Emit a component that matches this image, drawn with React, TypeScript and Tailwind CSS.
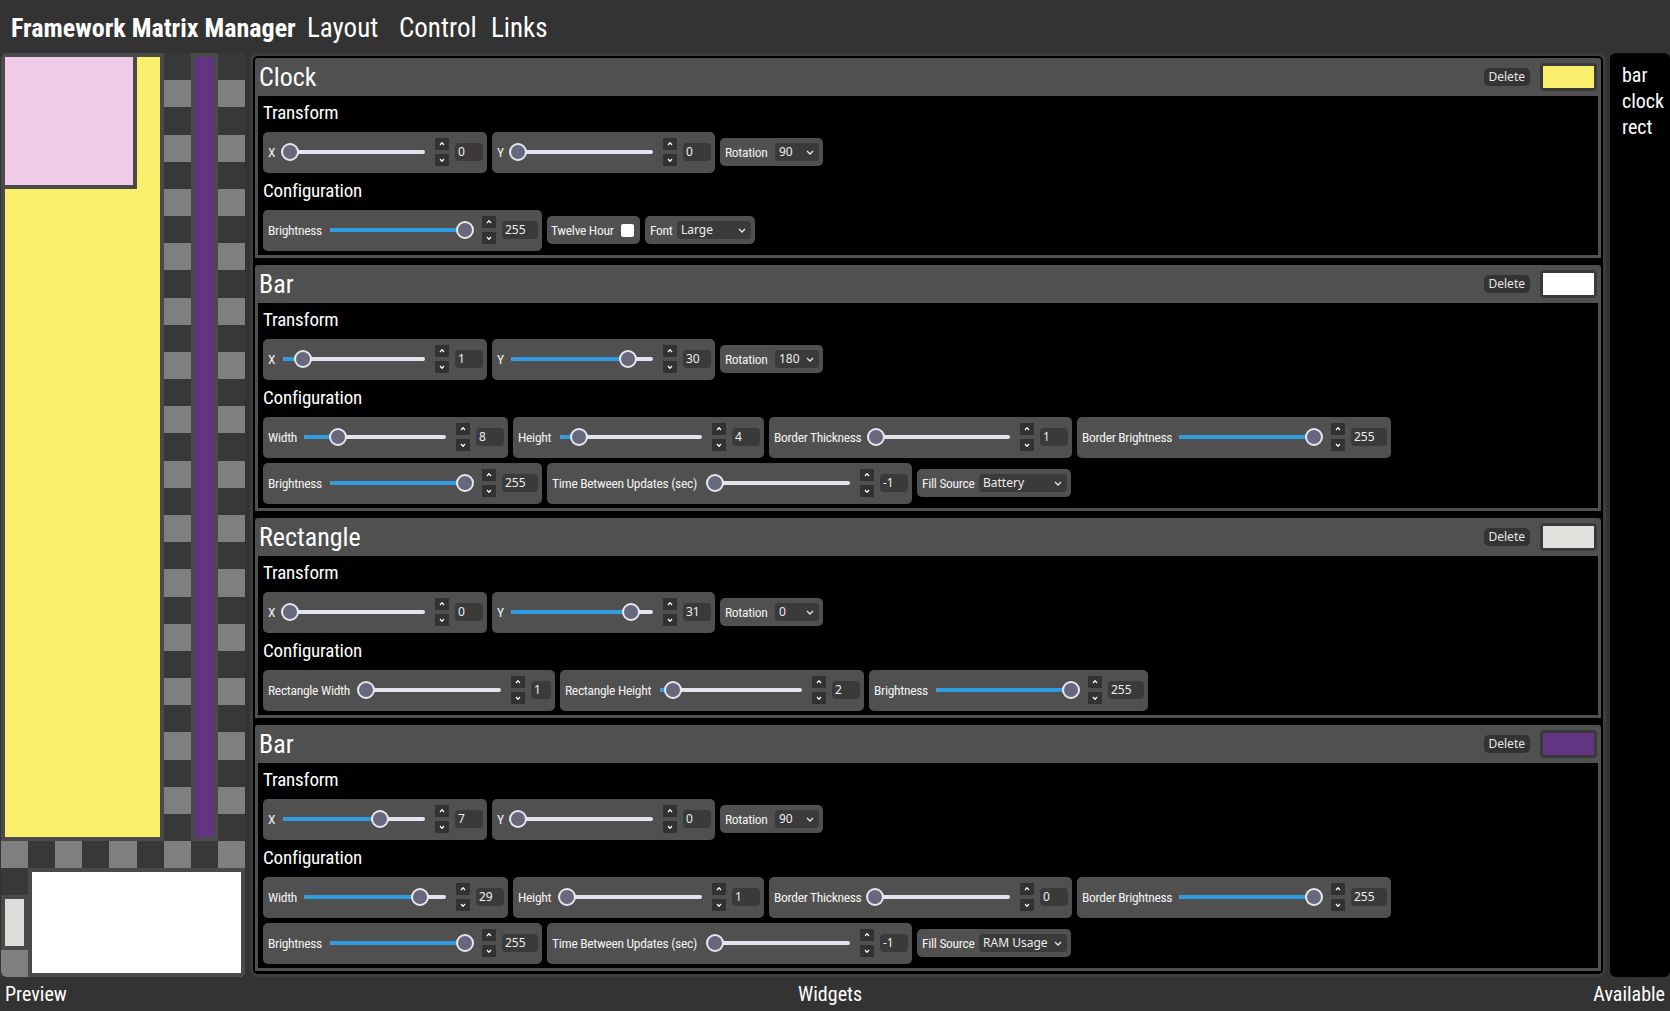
import React from "react";

type Slider = { kind: "slider"; label: string; value: string; pos: number; w: string; iw?: string };
type Select = { kind: "select"; label: string; value: string; w: string; sw: string };
type Check = { kind: "check"; label: string; w: string };
type Ctrl = Slider | Select | Check;

type Card = { title: string; swatch: string; transform: Ctrl[]; config: Ctrl[][] };

const xy = (x: string, xp: number, y: string, yp: number, rot: string): Ctrl[] => [
  { kind: "slider", label: "X", value: x, pos: xp, w: "w-[224px]" },
  { kind: "slider", label: "Y", value: y, pos: yp, w: "w-[223px]" },
  { kind: "select", label: "Rotation", value: rot, w: "w-[103px]", sw: "w-[44px]" },
];

const barConfig = (wv: string, wp: number, hv: string, hp: number, bt: string, btp: number, fill: string): Ctrl[][] => [
  [
    { kind: "slider", label: "Width", value: wv, pos: wp, w: "w-[245px]" },
    { kind: "slider", label: "Height", value: hv, pos: hp, w: "w-[251px]" },
    { kind: "slider", label: "Border Thickness", value: bt, pos: btp, w: "w-[303px]" },
    { kind: "slider", label: "Border Brightness", value: "255", pos: 1, w: "w-[314px]", iw: "w-[36px]" },
  ],
  [
    { kind: "slider", label: "Brightness", value: "255", pos: 1, w: "w-[279px]", iw: "w-[36px]" },
    { kind: "slider", label: "Time Between Updates (sec)", value: "-1", pos: 0, w: "w-[365px]" },
    { kind: "select", label: "Fill Source", value: fill, w: "w-[154px]", sw: "w-[88px]" },
  ],
];

const cards: Card[] = [
  {
    title: "Clock",
    swatch: "bg-[#f9ef6d]",
    transform: xy("0", 0, "0", 0, "90"),
    config: [
      [
        { kind: "slider", label: "Brightness", value: "255", pos: 1, w: "w-[279px]", iw: "w-[36px]" },
        { kind: "check", label: "Twelve Hour", w: "w-[93px]" },
        { kind: "select", label: "Font", value: "Large", w: "w-[110px]", sw: "w-[74px]" },
      ],
    ],
  },
  {
    title: "Bar",
    swatch: "bg-white",
    transform: xy("1", 0.1, "30", 0.857, "180"),
    config: barConfig("8", 0.21, "4", 0.09, "1", 0.01, "Battery"),
  },
  {
    title: "Rectangle",
    swatch: "bg-[#e0e0dc]",
    transform: xy("0", 0, "31", 0.886, "0"),
    config: [
      [
        { kind: "slider", label: "Rectangle Width", value: "1", pos: 0, w: "w-[292px]", iw: "w-[20px]" },
        { kind: "slider", label: "Rectangle Height", value: "2", pos: 0.05, w: "w-[304px]" },
        { kind: "slider", label: "Brightness", value: "255", pos: 1, w: "w-[279px]", iw: "w-[36px]" },
      ],
    ],
  },
  {
    title: "Bar",
    swatch: "bg-[#623582]",
    transform: xy("7", 0.7, "0", 0, "90"),
    config: barConfig("29", 0.853, "1", 0, "0", 0, "RAM Usage"),
  },
];

// preview widgets on the 9x34 matrix (col, row, w, h)
const previewItems = [
  { c: 0, r: 0, w: 6, h: 29, color: "bg-[#f9ef6d]" },
  { c: 0, r: 0, w: 5, h: 5, color: "bg-[#efcbe9]" },
  { c: 7, r: 0, w: 1, h: 29, color: "bg-[#623582]" },
  { c: 1, r: 30, w: 8, h: 4, color: "bg-white" },
  { c: 0, r: 31, w: 1, h: 2, color: "bg-[#dcdcd8]" },
];

const cells = Array.from({ length: 9 * 34 }, (_, i) => i);

const UI_FONT = "font-['Noto_Sans','Open_Sans',sans-serif] [font-stretch:normal]";
const LABEL = "min-w-0 flex-1 whitespace-nowrap text-[13.5px] tracking-[-0.3px] text-[#f2f2f2]";

const Caret = ({ down }: { down?: boolean }) => (
  <svg width="6" height="4" viewBox="0 0 6 4">
    <polyline
      points={down ? "1,1 3,3.3 5,1" : "1,3 3,0.7 5,3"}
      fill="none"
      stroke="white"
      strokeWidth="1.2"
    />
  </svg>
);

const Chevron = () => (
  <svg width="8" height="5" viewBox="0 0 8 5" className="shrink-0">
    <polyline points="1,1 4,4 7,1" fill="none" stroke="#e8e8e8" strokeWidth="1.3" />
  </svg>
);

function SliderBox({ c }: { c: Slider }) {
  const x = c.pos * 128;
  return (
    <div className={`${c.w} flex h-[41px] shrink-0 items-center rounded-[5px] bg-[#505050] pl-[5px] pr-[4px]`}>
      <span className={LABEL}>{c.label}</span>
      <div className="relative h-[18px] w-[146px] shrink-0">
        <div className="absolute left-[2px] right-[2px] top-[7px] h-[4px] rounded-full bg-[#e4e4ec]" />
        <div className="absolute left-[2px] top-[7px] h-[4px] rounded-full bg-[#2f9ce0]" style={{ width: x + 7 }} />
        <div
          className="absolute top-0 h-[18px] w-[18px] rounded-full border-2 border-[#e6e6ee] bg-[#67687b]"
          style={{ left: x }}
        />
      </div>
      <div className="ml-[8px] flex w-[14px] shrink-0 flex-col gap-[4px]">
        <div className="flex h-[12px] items-center justify-center bg-[#323232]">
          <Caret />
        </div>
        <div className="flex h-[12px] items-center justify-center bg-[#323232]">
          <Caret down />
        </div>
      </div>
      <div className={`${c.iw ?? "w-[28px]"} ${UI_FONT} ml-[6px] flex h-[18px] shrink-0 items-center rounded-[4px] bg-[#3a3a3a] pl-[3px] text-[12px] text-[#eeeeee]`}>
        {c.value}
      </div>
    </div>
  );
}

function SelectBox({ c }: { c: Select }) {
  return (
    <div className={`${c.w} flex h-[28px] shrink-0 items-center rounded-[5px] bg-[#505050] pl-[5px] pr-[4px]`}>
      <span className={LABEL}>{c.label}</span>
      <div className={`${c.sw} ${UI_FONT} flex h-[18px] shrink-0 items-center justify-between rounded-[4px] bg-[#3a3a3a] pl-[4px] pr-[5px] text-[12px] text-[#eeeeee]`}>
        <span className="whitespace-nowrap">{c.value}</span>
        <Chevron />
      </div>
    </div>
  );
}

function CheckBox({ c }: { c: Check }) {
  return (
    <div className={`${c.w} flex h-[28px] shrink-0 items-center rounded-[5px] bg-[#505050] pl-[4px] pr-[6px]`}>
      <span className={LABEL}>{c.label}</span>
      <div className="h-[13px] w-[13px] shrink-0 rounded-[2px] bg-white" />
    </div>
  );
}

function Control({ c }: { c: Ctrl }) {
  if (c.kind === "slider") return <SliderBox c={c} />;
  if (c.kind === "select") return <SelectBox c={c} />;
  return <CheckBox c={c} />;
}

function Row({ items }: { items: Ctrl[] }) {
  return (
    <div className="flex h-[42px] items-center gap-[5px]">
      {items.map((c, i) => (
        <Control key={i} c={c} />
      ))}
    </div>
  );
}

function WidgetCard({ card }: { card: Card }) {
  return (
    <div className="flex flex-col rounded-t-[3px] bg-[#505050] px-[3px] pb-[3px]">
      <div className="flex h-[38px] items-center justify-between pl-[1px] pr-[1px]">
        <span className="text-[26px] leading-none text-white">{card.title}</span>
        <div className="flex items-center gap-[10px]">
          <button className={`${UI_FONT} h-[18px] rounded-[5px] bg-[#333333] px-[5px] text-[12px] leading-none text-[#e8e8e8]`}>
            Delete
          </button>
          <div className="h-[28px] w-[57px] rounded-[4px] bg-[#3a3a3a] p-[3px]">
            <div className={`h-full w-full ${card.swatch}`} />
          </div>
        </div>
      </div>
      <div className="flex flex-col bg-black pb-[4px] pl-[5px] pt-[4px]">
        <div className="flex h-[26px] items-center text-[19px] tracking-[-0.2px] text-white">Transform</div>
        <div className="mt-[5px]">
          <Row items={card.transform} />
        </div>
        <div className="mt-[5px] flex h-[26px] items-center text-[19px] tracking-[-0.2px] text-white">Configuration</div>
        <div className="mt-[5px] flex flex-col gap-[4px]">
          {card.config.map((r, i) => (
            <Row key={i} items={r} />
          ))}
        </div>
      </div>
    </div>
  );
}

function Preview() {
  return (
    <div className="relative w-[244px] shrink-0 overflow-hidden rounded-[6px] bg-[#474747]">
      <div className="absolute inset-0 grid grid-cols-9 grid-rows-[repeat(34,minmax(0,1fr))]">
        {cells.map((i) => {
          const r = Math.floor(i / 9);
          const c = i % 9;
          return <div key={i} className={(r + c) % 2 === 0 ? "bg-[#383838]" : "bg-[#7f7f7f]"} />;
        })}
      </div>
      <div className="absolute inset-0 grid grid-cols-9 grid-rows-[repeat(34,minmax(0,1fr))]">
        {previewItems.map((p, i) => (
          <div
            key={i}
            className="border-4 border-[#4a4a4a]"
            style={{ gridColumn: `${p.c + 1} / span ${p.w}`, gridRow: `${p.r + 1} / span ${p.h}` }}
          >
            <div className={`h-full w-full ${p.color}`} />
          </div>
        ))}
      </div>
    </div>
  );
}

export default function App() {
  return (
    <div className="flex h-[1011px] w-[1670px] flex-col overflow-hidden bg-[#333333] font-['Roboto','Liberation_Sans',sans-serif] text-white [font-stretch:condensed]">
      {/* top bar */}
      <div className="flex h-[53px] shrink-0 items-center pl-[11px] pt-[4px] text-[27px]">
        <span className="w-[296px] whitespace-nowrap text-[26px] font-bold">Framework Matrix Manager</span>
        <span className="w-[92px]">Layout</span>
        <span className="w-[92px]">Control</span>
        <span>Links</span>
      </div>

      {/* panels */}
      <div className="flex min-h-0 flex-1 pl-[1px]">
        <Preview />
        <div className="ml-[5px] flex min-w-0 flex-1 flex-col gap-[7px] overflow-hidden rounded-[8px] border-[3px] border-[#3d3d3d] bg-black p-[2px]">
          {cards.map((c, i) => (
            <WidgetCard key={i} card={c} />
          ))}
        </div>
        <div className="ml-[4px] flex w-[60px] shrink-0 flex-col rounded-[6px] bg-black pl-[12px] pt-[9px] text-[20px] leading-[26px]">
          <span>bar</span>
          <span>clock</span>
          <span>rect</span>
        </div>
      </div>

      {/* labels */}
      <div className="flex h-[34px] shrink-0 items-center justify-between px-[5px] text-[20px]">
        <span>Preview</span>
        <span>Widgets</span>
        <span>Available</span>
      </div>
    </div>
  );
}
